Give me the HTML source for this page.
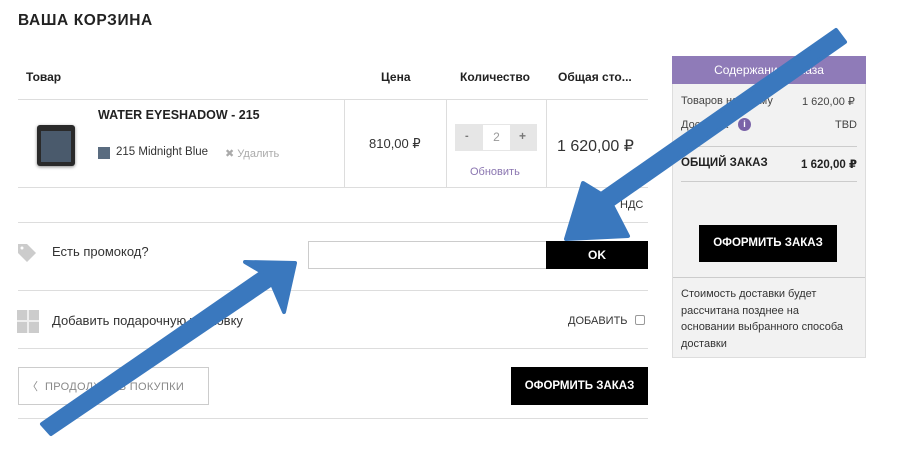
<!DOCTYPE html>
<html><head><meta charset="utf-8"><style>
*{margin:0;padding:0;box-sizing:border-box}
body{width:900px;height:451px;background:#fff;font-family:"Liberation Sans","DejaVu Sans",sans-serif;color:#222;position:relative;overflow:hidden}
.a{position:absolute;white-space:nowrap}
.hl{position:absolute;height:1px;background:#ddd}
.vl{position:absolute;width:1px;background:#ddd}
.b{font-weight:bold}
</style></head><body>
<div class="a b" style="left:18px;top:12px;font-size:15.5px;letter-spacing:0.6px">ВАША КОРЗИНА</div>
<div class="a b" style="left:26px;top:70px;font-size:12px">Товар</div>
<div class="a b" style="left:381px;top:70px;font-size:12px">Цена</div>
<div class="a b" style="left:460px;top:70px;font-size:12px">Количество</div>
<div class="a b" style="left:558px;top:70px;font-size:12px">Общая сто...</div>
<div class="hl" style="left:18px;top:99px;width:630px"></div>
<div class="vl" style="left:344px;top:99px;height:88px"></div>
<div class="vl" style="left:446px;top:99px;height:88px"></div>
<div class="vl" style="left:546px;top:99px;height:88px"></div>
<div class="hl" style="left:18px;top:187px;width:630px"></div>
<div class="a" style="left:37px;top:125px;width:38px;height:41px;background:#2a2a2a;border-radius:3px;box-shadow:0 1px 3px #888"></div>
<div class="a" style="left:41px;top:131px;width:30px;height:31px;background:#4a5a6c"></div>
<div class="a b" style="left:98px;top:108px;font-size:12.5px">WATER EYESHADOW - 215</div>
<div class="a" style="left:98px;top:147px;width:12px;height:12px;background:#5a6c80"></div>
<div class="a" style="left:116px;top:146px;font-size:11.5px;color:#333">215 Midnight Blue</div>
<div class="a" style="left:225px;top:147px;font-size:11px;color:#aaa">✖ Удалить</div>
<div class="a" style="left:369px;top:136px;font-size:13px;color:#333">810,00 ₽</div>
<div class="a" style="left:455px;top:124px;width:82px;height:27px;background:#e6e6e6"></div>
<div class="a" style="left:483px;top:125px;width:27px;height:25px;background:#fff;text-align:center;font-size:12px;color:#999;line-height:25px">2</div>
<div class="a b" style="left:465px;top:130px;font-size:11px;color:#777">-</div>
<div class="a b" style="left:519px;top:129px;font-size:12px;color:#777">+</div>
<div class="a" style="left:470px;top:166px;font-size:11px;color:#8a75b0">Обновить</div>
<div class="a" style="left:557px;top:136px;font-size:16px;color:#333">1 620,00 ₽</div>
<div class="a" style="left:620px;top:199px;font-size:11px;color:#333">НДС</div>
<div class="hl" style="left:18px;top:222px;width:630px"></div>
<svg class="a" style="left:16px;top:242px" width="22" height="22"><path d="M2 2h9l9 9-9 9-9-9z" fill="#ccc"/><circle cx="6" cy="6" r="1.5" fill="#fff"/></svg>
<div class="a" style="left:52px;top:244px;font-size:13px;color:#333">Есть промокод?</div>
<div class="a" style="left:308px;top:241px;width:239px;height:28px;border:1px solid #ccc"></div>
<div class="a b" style="left:546px;top:241px;width:102px;height:28px;background:#000;color:#fff;font-size:12px;text-align:center;line-height:28px">OK</div>
<div class="hl" style="left:18px;top:290px;width:630px"></div>
<div class="a" style="left:17px;top:310px;width:22px;height:23px;background:#ccc"></div>
<div class="a" style="left:27px;top:310px;width:2px;height:23px;background:#eee"></div>
<div class="a" style="left:17px;top:320px;width:22px;height:2px;background:#eee"></div>
<div class="a" style="left:52px;top:313px;font-size:13px;color:#333">Добавить подарочную упаковку</div>
<div class="a" style="left:568px;top:315px;font-size:11px;color:#333">ДОБАВИТЬ</div>
<div class="a" style="left:635px;top:315px;width:10px;height:10px;border:1px solid #999;border-radius:2px"></div>
<div class="hl" style="left:18px;top:348px;width:630px"></div>
<div class="a" style="left:18px;top:367px;width:191px;height:38px;border:1px solid #ccc"></div>
<div class="a" style="left:27px;top:378px;font-size:11px;color:#888;letter-spacing:0.3px">〈&nbsp; ПРОДОЛЖИТЬ ПОКУПКИ</div>
<div class="a b" style="left:511px;top:367px;width:137px;height:38px;background:#000;color:#fff;font-size:11.5px;text-align:center;line-height:38px">ОФОРМИТЬ ЗАКАЗ</div>
<div class="hl" style="left:18px;top:418px;width:630px"></div>
<div class="a" style="left:672px;top:56px;width:194px;height:302px;background:#f2f2f2;border:1px solid #ddd"></div>
<div class="a" style="left:672px;top:56px;width:194px;height:28px;background:#8f7bb8;color:#fff;font-size:12px;text-align:center;line-height:28px">Содержание заказа</div>
<div class="a" style="left:681px;top:95px;font-size:11px;color:#444">Товаров на сумму</div>
<div class="a" style="left:802px;top:95px;font-size:11px;color:#444">1 620,00 ₽</div>
<div class="a" style="left:681px;top:119px;font-size:11px;color:#444">Доставка</div>
<div class="a b" style="left:738px;top:118px;width:13px;height:13px;border-radius:50%;background:#7a63a8;color:#fff;font-size:9px;text-align:center;line-height:13px">i</div>
<div class="a" style="left:835px;top:119px;font-size:11px;color:#444">TBD</div>
<div class="hl" style="left:681px;top:146px;width:176px;background:#ccc"></div>
<div class="a b" style="left:681px;top:157px;font-size:11.5px">ОБЩИЙ ЗАКАЗ</div>
<div class="a b" style="left:801px;top:157px;font-size:11.5px">1 620,00 ₽</div>
<div class="hl" style="left:681px;top:181px;width:176px;background:#ccc"></div>
<div class="a b" style="left:699px;top:225px;width:138px;height:37px;background:#000;color:#fff;font-size:11.5px;text-align:center;line-height:37px">ОФОРМИТЬ ЗАКАЗ</div>
<div class="hl" style="left:673px;top:277px;width:192px;background:#ccc"></div>
<div class="a" style="left:681px;top:286px;font-size:11px;color:#333;line-height:16.5px;white-space:normal;width:166px">Стоимость доставки будет рассчитана позднее на основании выбранного способа доставки</div>
<svg class="a" style="left:0;top:0" width="900" height="451">
<g fill="#3a78be" stroke="#3a78be" stroke-linejoin="round" stroke-width="4">
<polygon points="836,30 845,42 612,205 628,236 566,239 583,183 601,194"/>
<polygon points="42,424 51,434 272,284 284,312 295,263 245,262 262,272"/>
</g></svg>
</body></html>
